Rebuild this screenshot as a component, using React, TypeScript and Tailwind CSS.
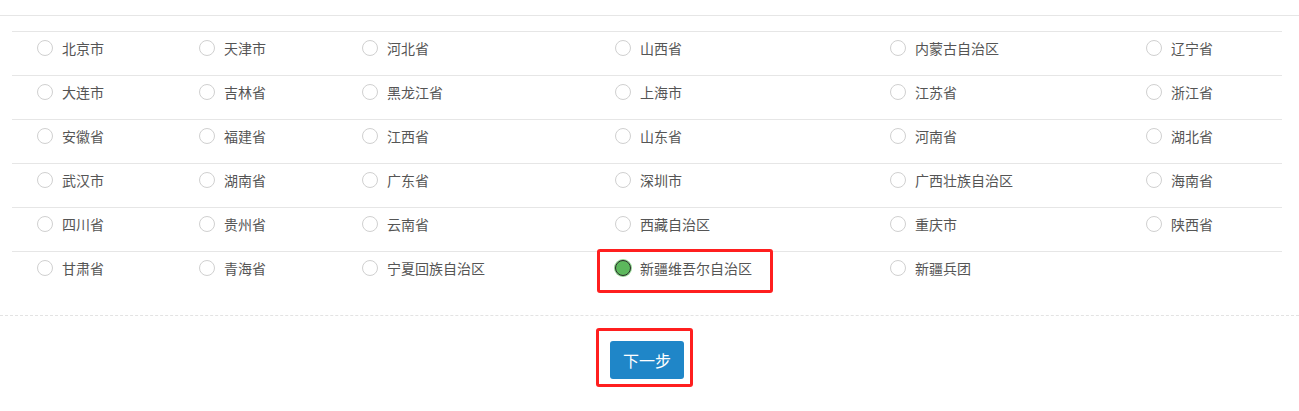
const rows = [
  ['北京市', '天津市', '河北省', '山西省', '内蒙古自治区', '辽宁省'],
  ['大连市', '吉林省', '黑龙江省', '上海市', '江苏省', '浙江省'],
  ['安徽省', '福建省', '江西省', '山东省', '河南省', '湖北省'],
  ['武汉市', '湖南省', '广东省', '深圳市', '广西壮族自治区', '海南省'],
  ['四川省', '贵州省', '云南省', '西藏自治区', '重庆市', '陕西省'],
  ['甘肃省', '青海省', '宁夏回族自治区', '新疆维吾尔自治区', '新疆兵团'],
]

const selected = '新疆维吾尔自治区'

function Radio({ checked }: { checked: boolean }) {
  if (checked) {
    return (
      <span className="w-[16px] h-[16px] rounded-full border border-[#2a2a2a] bg-[#5cb85c] shadow-[0_0_0_1px_#8fd48f] shrink-0" />
    )
  }
  return <span className="w-[16px] h-[16px] rounded-full border border-[#d0d0d0] bg-white shrink-0" />
}

export default function App() {
  return (
    <div
      className="w-[1299px] h-[411px] bg-white overflow-hidden"
      style={{ fontFamily: '"Microsoft YaHei", "Noto Sans CJK SC", "Liberation Sans", sans-serif' }}
    >
      <div className="h-[16px] border-b border-[#e6e6e6]" />

      {/* province table */}
      <div className="px-[12px] pt-[15px] pb-[20px] border-b border-dashed border-[#e3e3e3]">
        <div className="w-[1270px]">
          {rows.map((row, i) => (
            <div
              key={i}
              className="grid grid-cols-[162px_163px_253px_275px_256px_161px] h-[44px] border-t border-[#e6e6e6]"
            >
              {row.map(name => {
                const on = name === selected
                return (
                  <div key={name} className="relative pl-[25px]">
                    <label className="flex items-center gap-[9px] h-[32px] text-[14px] text-[#555]">
                      <Radio checked={on} />
                      <span className="whitespace-nowrap">{name}</span>
                    </label>
                    {on && (
                      <div className="absolute left-[7px] top-[-3px] w-[176px] h-[44px] border-[3px] border-[#ff1f1f] rounded-[3px]" />
                    )}
                  </div>
                )
              })}
            </div>
          ))}
        </div>
      </div>

      {/* next step */}
      <div className="flex justify-center pt-[25px] pr-[5px]">
        <div className="relative">
          <button className="w-[74px] h-[38px] rounded-[3px] bg-[#1f86c8] text-white text-[16px]">
            下一步
          </button>
          <div className="absolute left-[-14px] top-[-13px] w-[97px] h-[59px] border-[3px] border-[#ff1f1f] rounded-[3px]" />
        </div>
      </div>
    </div>
  )
}
